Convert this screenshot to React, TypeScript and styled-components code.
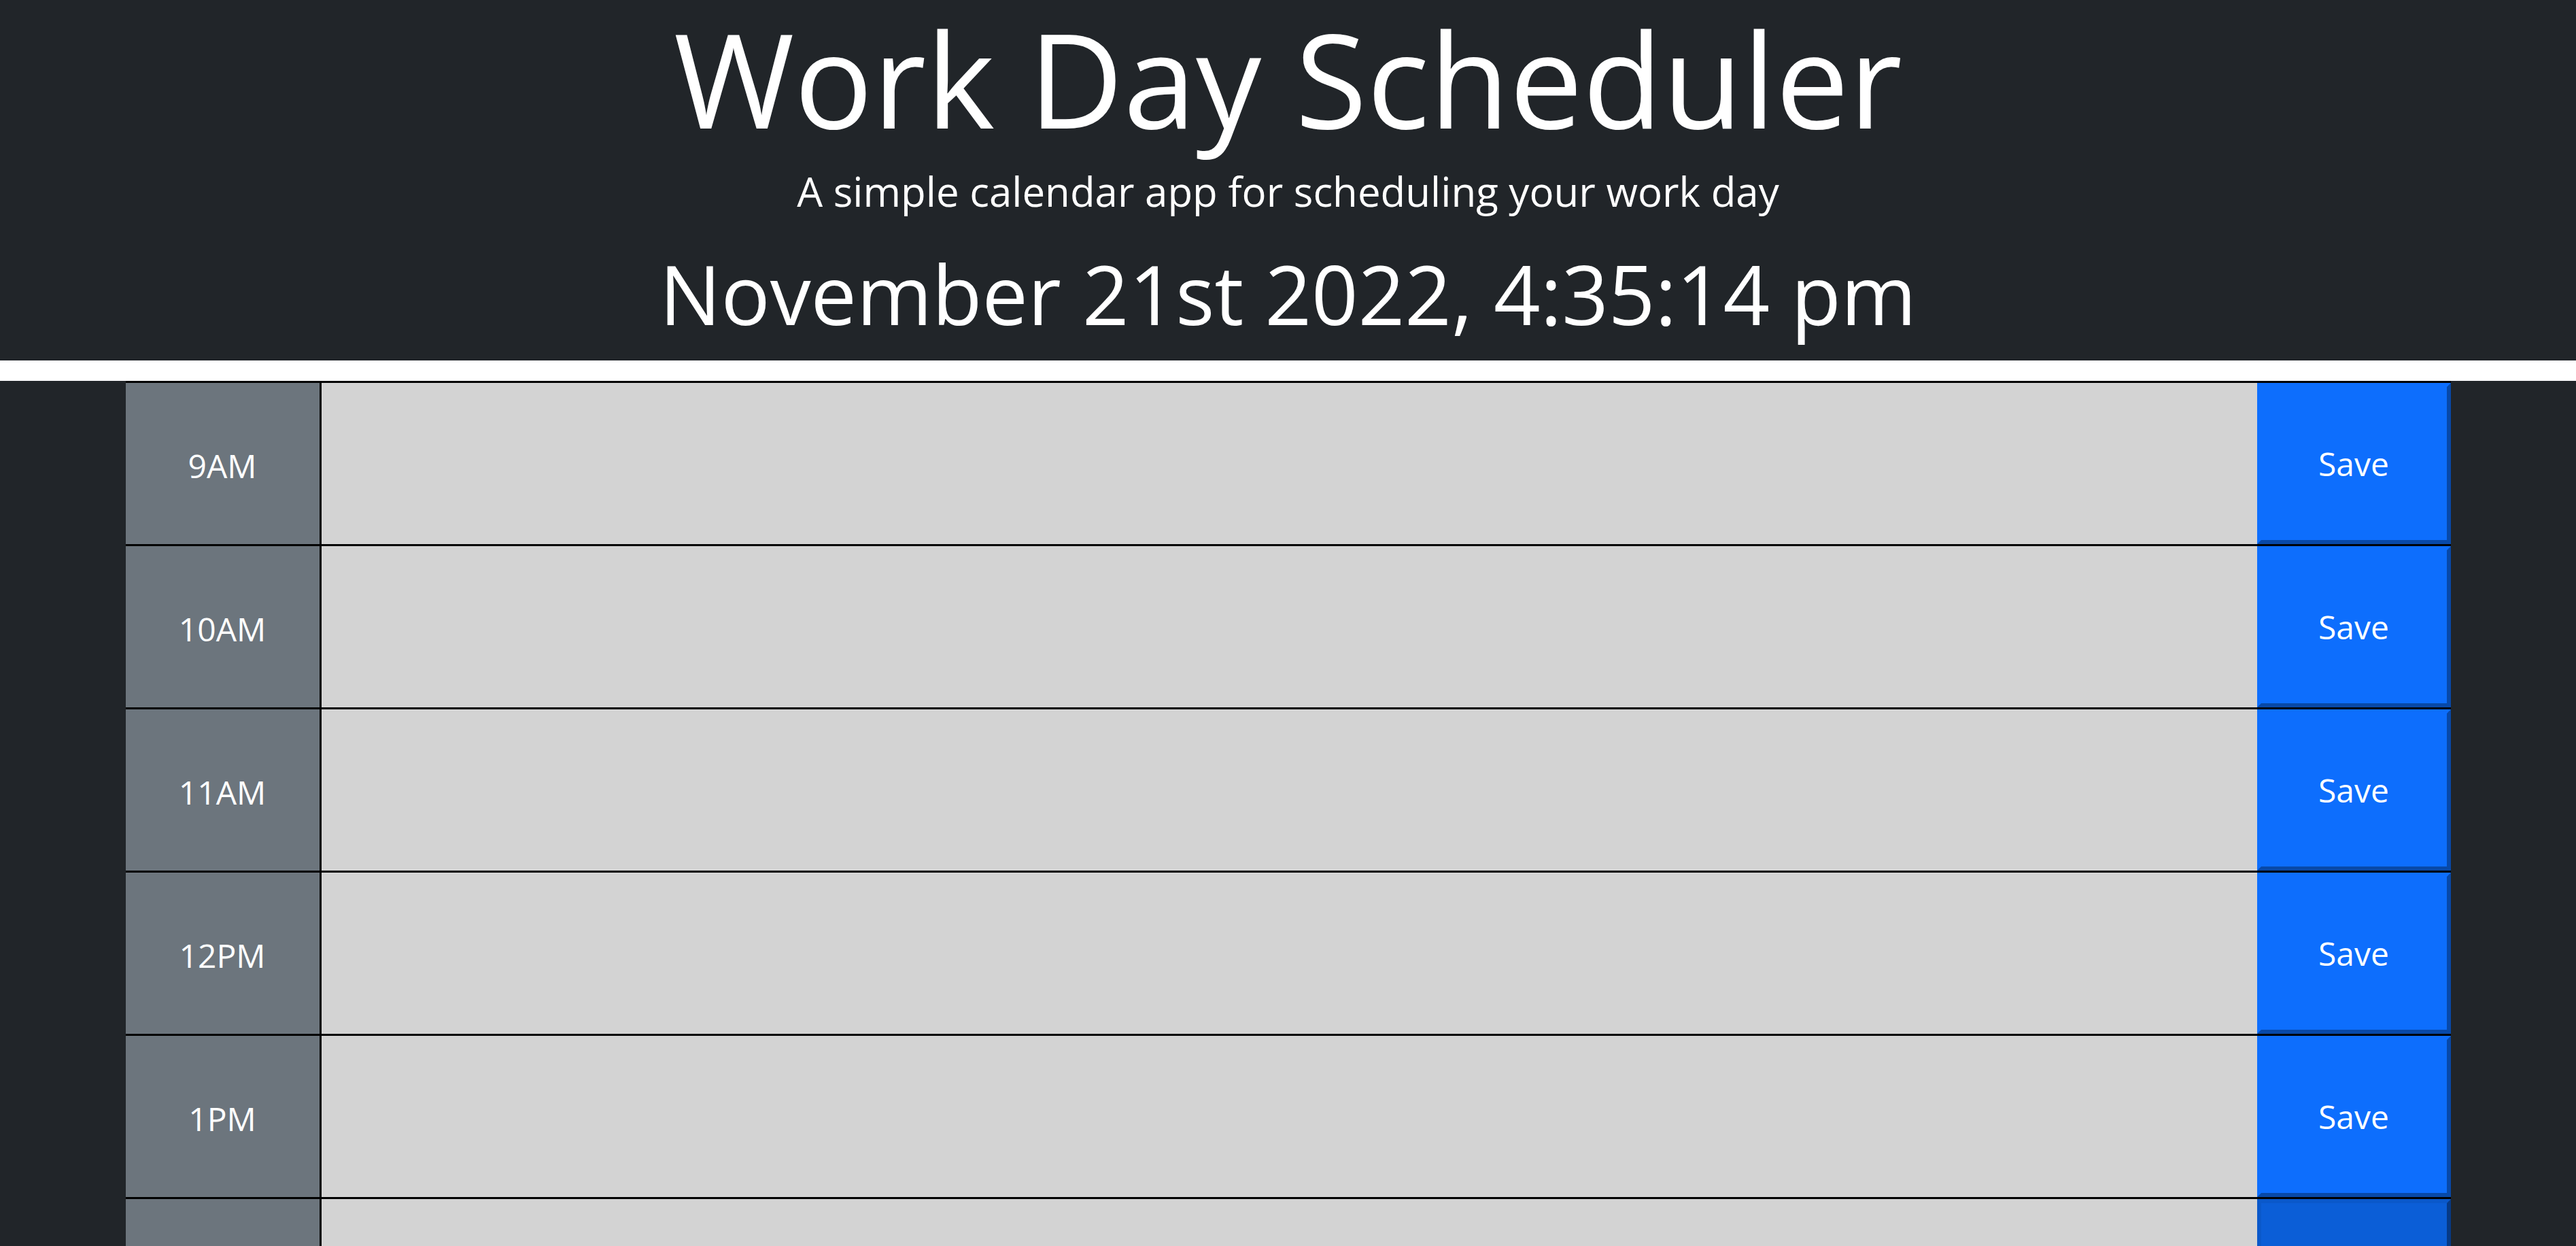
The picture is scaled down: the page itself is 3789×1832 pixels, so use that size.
//* import third-party deps
import styled, { createGlobalStyle } from "styled-components";

//* hours shown in the planner, the hovered flag marks the save button the mouse sits on
const HOURS = ["9AM", "10AM", "11AM", "12PM", "1PM", "2PM", "3PM", "4PM", "5PM"];
const HOVERED_INDEX = 5;

/*
 * GlobalStyle resets the page and sets the dark background + font
*/
const GlobalStyle = createGlobalStyle`
  html, body {
    margin: 0;
    padding: 0;
    background-color: #212529;
    font-family: "Open Sans", "Liberation Sans", sans-serif;
    color: white;
  }
  * {
    box-sizing: border-box;
  }
`;

/*
 * App is the whole work day scheduler page
 @returns JSX.element jsx structure for the scheduler
*/
const App = (): JSX.Element => {
  //* render
  return (
    <>
      <GlobalStyle />
      <Header>
        <Title>Work Day Scheduler</Title>
        <Lead>A simple calendar app for scheduling your work day</Lead>
        <CurrentDay>November 21st 2022, 4:35:14 pm</CurrentDay>
      </Header>
      <Container>
        {HOURS.map((hour, i) => (
          <TimeBlock key={hour}>
            <Hour>{hour}</Hour>
            <Description aria-label={`${hour} notes`} />
            <SaveButton $hovered={i === HOVERED_INDEX}>Save</SaveButton>
          </TimeBlock>
        ))}
      </Container>
    </>
  );
};

export default App;

//lines below this point are styled-components logic

/*
 * Header is the dark jumbotron with the white strip underneath
*/
const Header = styled.header`
  display: flex;
  flex-direction: column;
  align-items: center;
  text-align: center;
  padding: 0 0 26px;
  background-color: #212529;
  border-bottom: 30px solid white;
`;

const Title = styled.h1`
  margin: 0;
  font-size: 192px;
  font-weight: 400;
  line-height: 1.2;
`;

const Lead = styled.p`
  margin: 6px 0 0;
  font-size: 60px;
  font-weight: 400;
  line-height: 1.5;
`;

const CurrentDay = styled.p`
  margin: 34px 0 0;
  font-size: 120px;
  font-weight: 400;
  line-height: 1.2;
`;

/*
 * Container centers the rows like a bootstrap container would
*/
const Container = styled.main`
  width: 3420px;
  margin: 0 auto;
`;

/*
 * TimeBlock is one hour row: label, textarea, save button
*/
const TimeBlock = styled.section`
  display: grid;
  grid-template-columns: 1fr 10fr 1fr;
  height: 240px;
  border-top: 3px solid black;
`;

const Hour = styled.div`
  display: flex;
  align-items: center;
  justify-content: center;
  padding-top: 6px;
  background-color: #6c757d;
  color: white;
  font-size: 48px;
  line-height: 1.5;
`;

const Description = styled.textarea`
  margin: 0;
  padding: 0;
  border: none;
  border-left: 3px solid black;
  background-color: #d3d3d3;
  resize: none;
  font-family: inherit;
  font-size: 48px;
  outline: none;
`;

const SaveButton = styled.button<{ $hovered: boolean }>`
  margin: 0;
  padding: 0;
  border-width: 6px;
  border-style: solid;
  border-color: ${(p) =>
    p.$hovered ? "#0a58ca #073a86 #073a86 #0a58ca" : "#0d6efd #0849a8 #0849a8 #0d6efd"};
  background-color: ${(p) => (p.$hovered ? "#0b5ed7" : "#0d6efd")};
  color: white;
  font-family: inherit;
  font-size: 48px;
  line-height: 1.5;
  cursor: pointer;
`;
